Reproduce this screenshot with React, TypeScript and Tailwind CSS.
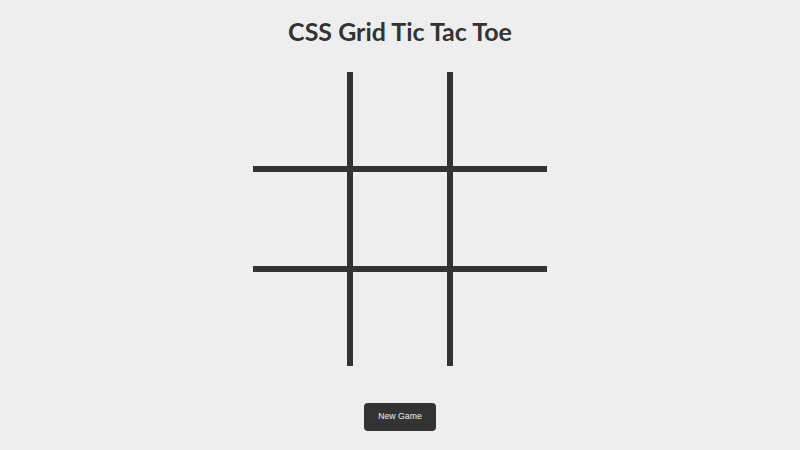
export default function App() {
  const cells = Array.from({ length: 9 });
  return (
    <div className="min-h-[450px] w-full bg-[#eeeeee] flex flex-col items-center">
      <h1 className="mt-[16px] text-[25px] leading-[31px] font-bold text-[#333333] font-['Lato',sans-serif]">
        CSS Grid Tic Tac Toe
      </h1>
      <div className="mt-[25px] grid grid-cols-[94px_94px_94px] grid-rows-[94px_94px_94px] gap-[6px] bg-[#333333]">
        {cells.map((_, i) => (
          <div key={i} className="bg-[#eeeeee]" />
        ))}
      </div>
      <button className="mt-[37px] h-[28px] w-[72px] rounded-[4px] bg-[#333333] text-[#eeeeee] text-[8.7px] font-['Liberation_Sans',Arial,sans-serif]">
        New Game
      </button>
    </div>
  );
}
